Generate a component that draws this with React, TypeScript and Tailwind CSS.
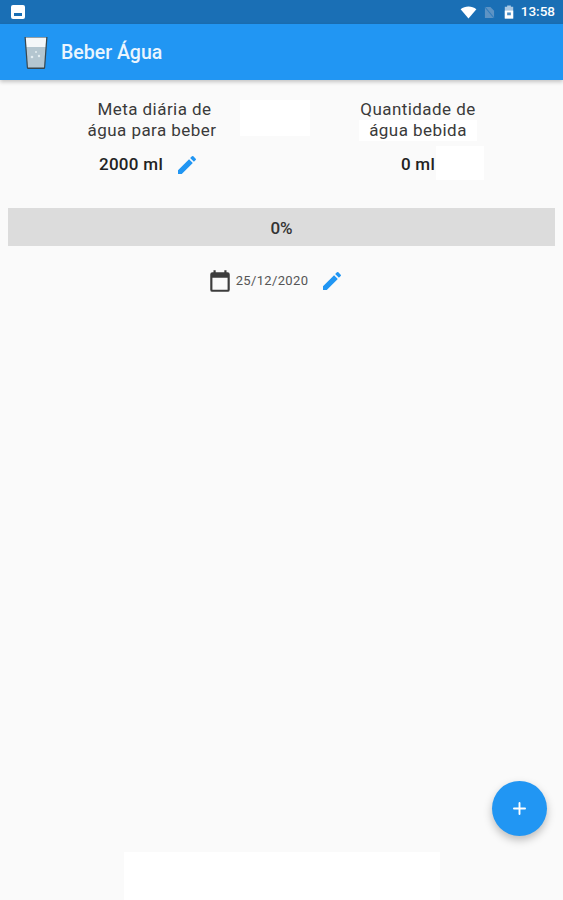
import { Plus } from "lucide-react";

function PencilIcon({ className }: { className: string }) {
  return (
    <svg viewBox="0 0 24 24" className={className} fill="currentColor">
      <path d="M3 17.25V21h3.75L17.81 9.94l-3.75-3.75L3 17.25zM20.71 7.04a1 1 0 0 0 0-1.41l-2.34-2.34a1 1 0 0 0-1.41 0l-1.83 1.83 3.75 3.75 1.83-1.83z" />
    </svg>
  );
}

function CalendarIcon() {
  return (
    <svg viewBox="0 0 24 24" className="w-[26px] h-[26px] text-[#3c3c3c]" fill="currentColor">
      <path d="M19 4h-1V2h-2v2H8V2H6v2H5a2 2 0 0 0-2 2v14a2 2 0 0 0 2 2h14a2 2 0 0 0 2-2V6a2 2 0 0 0-2-2zm0 16H5V9h14v11z" />
    </svg>
  );
}

function StatusBar() {
  return (
    <div className="h-6 bg-[#1a6fb5] flex items-center justify-between pl-[11px] pr-[8px]">
      <div className="w-[14px] h-[14px] rounded-[2px] bg-white flex items-end justify-center pb-[3px]">
        <div className="w-2 h-[3px] bg-[#1a6fb5]" />
      </div>
      <div className="flex items-center">
        <svg viewBox="0 0 18 14" className="w-[17px] h-[13px]" fill="white">
          <path d="M9 13.5 0.5 3.5C3 1.5 5.8 0.5 9 0.5s6 1 8.5 3L9 13.5z" />
        </svg>
        <svg viewBox="0 0 12 14" className="w-[11px] h-[13px] ml-[7px]">
          <path d="M1 1h6l4 4v8H1z" fill="#5d93c4" />
          <path d="M1 1l10 12" stroke="#2f7cbc" strokeWidth="1.2" />
        </svg>
        <svg viewBox="0 0 10 15" className="w-[10px] h-[14px] ml-[9px]">
          <path d="M3 0.5h4V2h2.5v12.5H0.5V2H3z" fill="#a9c8e3" />
          <path d="M0.5 6h9v8.5h-9z" fill="white" />
          <path d="M3 8h4v3H3z" fill="#4d8fc6" />
        </svg>
        <span className="ml-[7px] text-[13.5px] font-medium text-white leading-none">13:58</span>
      </div>
    </div>
  );
}

function GlassIcon() {
  return (
    <svg viewBox="0 0 24 33" className="w-[24px] h-[33px]">
      <path d="M0.5 1h23l-2.3 30.5a1.5 1.5 0 0 1-1.5 1.5H4.3a1.5 1.5 0 0 1-1.5-1.5z" fill="#37474f" />
      <path d="M1.8 1.5h20.4l-.7 9.5H2.5z" fill="#f4f7f9" />
      <path d="M2.5 11h19L20 31.5H4z" fill="#b4c6d0" />
      <circle cx="8" cy="21" r="1.3" fill="#e4edf1" />
      <circle cx="12" cy="16" r="1" fill="#e4edf1" />
      <circle cx="15" cy="20" r="1.2" fill="#e4edf1" />
    </svg>
  );
}

function AppBar() {
  return (
    <div className="h-14 bg-[#2196f3] flex items-center pl-6 shadow-[0_2px_4px_rgba(0,0,0,0.22)] relative z-10">
      <GlassIcon />
      <h1 className="ml-[13px] pt-[2px] text-[19.5px] font-medium text-[#eaf5fe]">Beber Água</h1>
    </div>
  );
}

function Summary() {
  return (
    <div className="flex pt-[19px] text-[17px] leading-[21px] text-[#3a3a3a] tracking-[0.45px]">
      <div className="w-[304px] text-center">
        <p className="pl-[5px]">Meta diária de</p>
        <p>água para beber</p>
      </div>
      <div className="w-[228px] text-center">
        <p>Quantidade de</p>
        <p className="w-fit mx-auto px-[10px] bg-white">água bebida</p>
      </div>
    </div>
  );
}

function Values() {
  return (
    <div className="flex items-center mt-[12px] h-6 text-[17px] tracking-[0.3px] font-medium text-[#222]">
      <div className="w-[304px] flex items-center justify-center pr-[6px]">
        <span>2000 ml</span>
        <PencilIcon className="w-[24px] h-[24px] ml-[12px] text-[#2196f3]" />
      </div>
      <div className="w-[228px] text-center">0 ml</div>
    </div>
  );
}

export default function App() {
  return (
    <div className="relative w-[563px] h-[900px] overflow-hidden bg-[#fafafa] font-['Roboto',sans-serif]">
      <StatusBar />
      <AppBar />
      <Summary />
      <Values />

      <div className="mx-2 mt-[31px] h-[38px] bg-[#dcdcdc] flex items-center justify-center pt-[3px] text-[17px] font-medium text-[#333]">
        0%
      </div>

      <div className="flex items-center justify-center mt-[22px] pr-[12px]">
        <CalendarIcon />
        <span className="ml-[3px] text-[13px] text-[#555] tracking-[0.35px]">25/12/2020</span>
        <PencilIcon className="w-[24px] h-[24px] ml-[12px] text-[#2196f3]" />
      </div>

      {/* white patches sitting over the page */}
      <div className="absolute left-[240px] top-[100px] w-[70px] h-[36px] bg-white" />
      <div className="absolute left-[436px] top-[146px] w-[48px] h-[34px] bg-white" />
      <div className="absolute left-[124px] top-[852px] w-[316px] h-[48px] bg-white" />

      <button className="absolute left-[492px] top-[781px] w-[55px] h-[55px] rounded-full bg-[#2196f3] flex items-center justify-center shadow-[0_4px_8px_rgba(0,0,0,0.25)]">
        <Plus className="w-[19px] h-[19px] text-white" strokeWidth={2.4} />
      </button>
    </div>
  );
}
